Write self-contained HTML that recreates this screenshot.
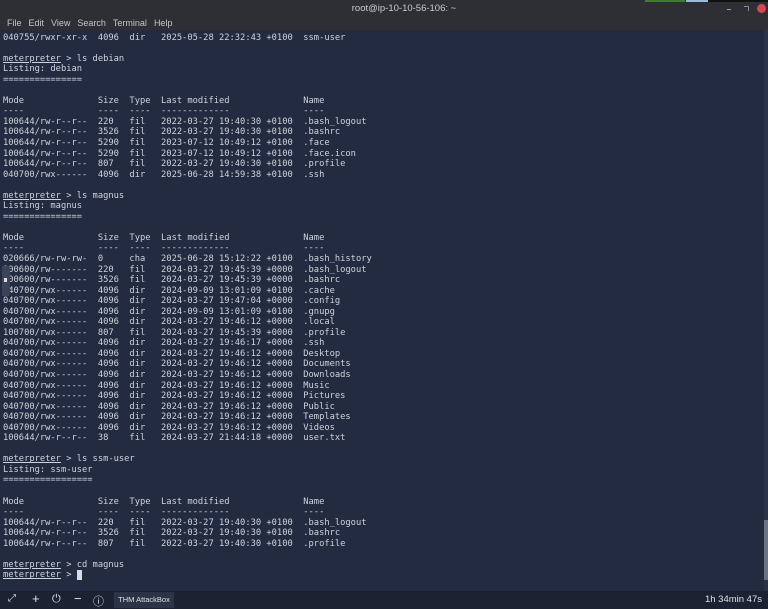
<!DOCTYPE html>
<html><head><meta charset="utf-8"><style>
html,body{margin:0;padding:0;width:768px;height:609px;overflow:hidden;background:#222b40;}
#title{position:absolute;left:0;top:0;width:768px;height:30px;background:#2d2f35;}
#title .t{position:absolute;left:0;width:768px;top:3px;text-align:center;font:9.5px "Liberation Sans",sans-serif;color:#c8cad0;padding-left:40px;box-sizing:border-box}
#title .m{position:absolute;left:7px;top:18px;font:9px "Liberation Sans",sans-serif;color:#c4c6cc;word-spacing:3px}
#title .m span{margin-right:7px}
#bar{position:absolute;left:645px;top:0;width:40px;height:2px;background:#3e7d2c}
#bar2{position:absolute;left:686px;top:0;width:22px;height:2px;background:#9fb7d8}
#bar3{position:absolute;left:708px;top:0;width:60px;height:2px;background:#111}
.close{position:absolute;left:757px;top:4px;width:9px;height:9px;border-radius:50%;background:#d9464f}
.min{position:absolute;left:727px;top:9px;width:4px;height:1px;background:#999}
.max{position:absolute;left:744px;top:6px;width:4px;height:4px;border-top:1px solid #888;border-right:1px solid #888}
pre{position:absolute;left:3px;top:32.5px;margin:0;font-family:"DejaVu Sans Mono","Liberation Mono",monospace;font-size:8.76px;line-height:10.55px;color:#cfd3db;letter-spacing:0}
u{text-decoration:underline}
.cur{background:#d8dbe2;color:#d8dbe2}
#sb{position:absolute;left:764px;top:30px;width:4px;height:561px;background:#2b3346}
#sb i{position:absolute;left:0;top:490px;width:4px;height:60px;background:#6b7180}
#side{position:absolute;left:2px;top:266px;width:8px;height:30px;background:#3a4357;border-radius:2px}
#side:after{content:"";position:absolute;left:2px;top:12px;width:3px;height:4px;background:#e0e0e0}
#task{position:absolute;left:0;top:591px;width:768px;height:18px;background:#1c2232;color:#dde0e6;font-family:"Liberation Sans",sans-serif}
#task .ic{position:absolute;top:2px;font-size:11px}
#task .btn{position:absolute;left:114px;top:1px;width:60px;height:16px;background:#2c3346;font-size:7.5px;line-height:16px;text-align:center}
#task .tm{position:absolute;right:6px;top:3px;font-size:9.5px}
</style></head><body>
<div id="title"><div class="t">root@ip-10-10-56-106: ~</div>
<div class="m"><span>File</span><span>Edit</span><span>View</span><span>Search</span><span>Terminal</span><span>Help</span></div></div>
<div id="bar"></div><div id="bar2"></div><div id="bar3"></div>
<div class="min"></div><div class="max"></div><div class="close"></div>
<pre>040755/rwxr-xr-x  4096  dir   2025-05-28 22:32:43 +0100  ssm-user

<u>meterpreter</u> &gt; ls debian
Listing: debian
===============

Mode              Size  Type  Last modified              Name
----              ----  ----  -------------              ----
100644/rw-r--r--  220   fil   2022-03-27 19:40:30 +0100  .bash_logout
100644/rw-r--r--  3526  fil   2022-03-27 19:40:30 +0100  .bashrc
100644/rw-r--r--  5290  fil   2023-07-12 10:49:12 +0100  .face
100644/rw-r--r--  5290  fil   2023-07-12 10:49:12 +0100  .face.icon
100644/rw-r--r--  807   fil   2022-03-27 19:40:30 +0100  .profile
040700/rwx------  4096  dir   2025-06-28 14:59:38 +0100  .ssh

<u>meterpreter</u> &gt; ls magnus
Listing: magnus
===============

Mode              Size  Type  Last modified              Name
----              ----  ----  -------------              ----
020666/rw-rw-rw-  0     cha   2025-06-28 15:12:22 +0100  .bash_history
100600/rw-------  220   fil   2024-03-27 19:45:39 +0000  .bash_logout
100600/rw-------  3526  fil   2024-03-27 19:45:39 +0000  .bashrc
040700/rwx------  4096  dir   2024-09-09 13:01:09 +0100  .cache
040700/rwx------  4096  dir   2024-03-27 19:47:04 +0000  .config
040700/rwx------  4096  dir   2024-09-09 13:01:09 +0100  .gnupg
040700/rwx------  4096  dir   2024-03-27 19:46:12 +0000  .local
100700/rwx------  807   fil   2024-03-27 19:45:39 +0000  .profile
040700/rwx------  4096  dir   2024-03-27 19:46:17 +0000  .ssh
040700/rwx------  4096  dir   2024-03-27 19:46:12 +0000  Desktop
040700/rwx------  4096  dir   2024-03-27 19:46:12 +0000  Documents
040700/rwx------  4096  dir   2024-03-27 19:46:12 +0000  Downloads
040700/rwx------  4096  dir   2024-03-27 19:46:12 +0000  Music
040700/rwx------  4096  dir   2024-03-27 19:46:12 +0000  Pictures
040700/rwx------  4096  dir   2024-03-27 19:46:12 +0000  Public
040700/rwx------  4096  dir   2024-03-27 19:46:12 +0000  Templates
040700/rwx------  4096  dir   2024-03-27 19:46:12 +0000  Videos
100644/rw-r--r--  38    fil   2024-03-27 21:44:18 +0000  user.txt

<u>meterpreter</u> &gt; ls ssm-user
Listing: ssm-user
=================

Mode              Size  Type  Last modified              Name
----              ----  ----  -------------              ----
100644/rw-r--r--  220   fil   2022-03-27 19:40:30 +0100  .bash_logout
100644/rw-r--r--  3526  fil   2022-03-27 19:40:30 +0100  .bashrc
100644/rw-r--r--  807   fil   2022-03-27 19:40:30 +0100  .profile

<u>meterpreter</u> &gt; cd magnus
<u>meterpreter</u> &gt; <span class="cur">_</span></pre>
<div id="side"></div>
<div id="sb"><i></i></div>
<div id="task">
<span class="ic" style="left:8px;font-size:10px">⤢</span>
<span class="ic" style="left:32px;font-size:13px;top:0">+</span>
<span class="ic" style="left:52px">⏻</span>
<span class="ic" style="left:74px;font-size:13px;top:0">−</span>
<span class="ic" style="left:93px">ⓘ</span>
<div class="btn">THM AttackBox</div>
<div class="tm">1h 34min 47s</div>
</div>
</body></html>
